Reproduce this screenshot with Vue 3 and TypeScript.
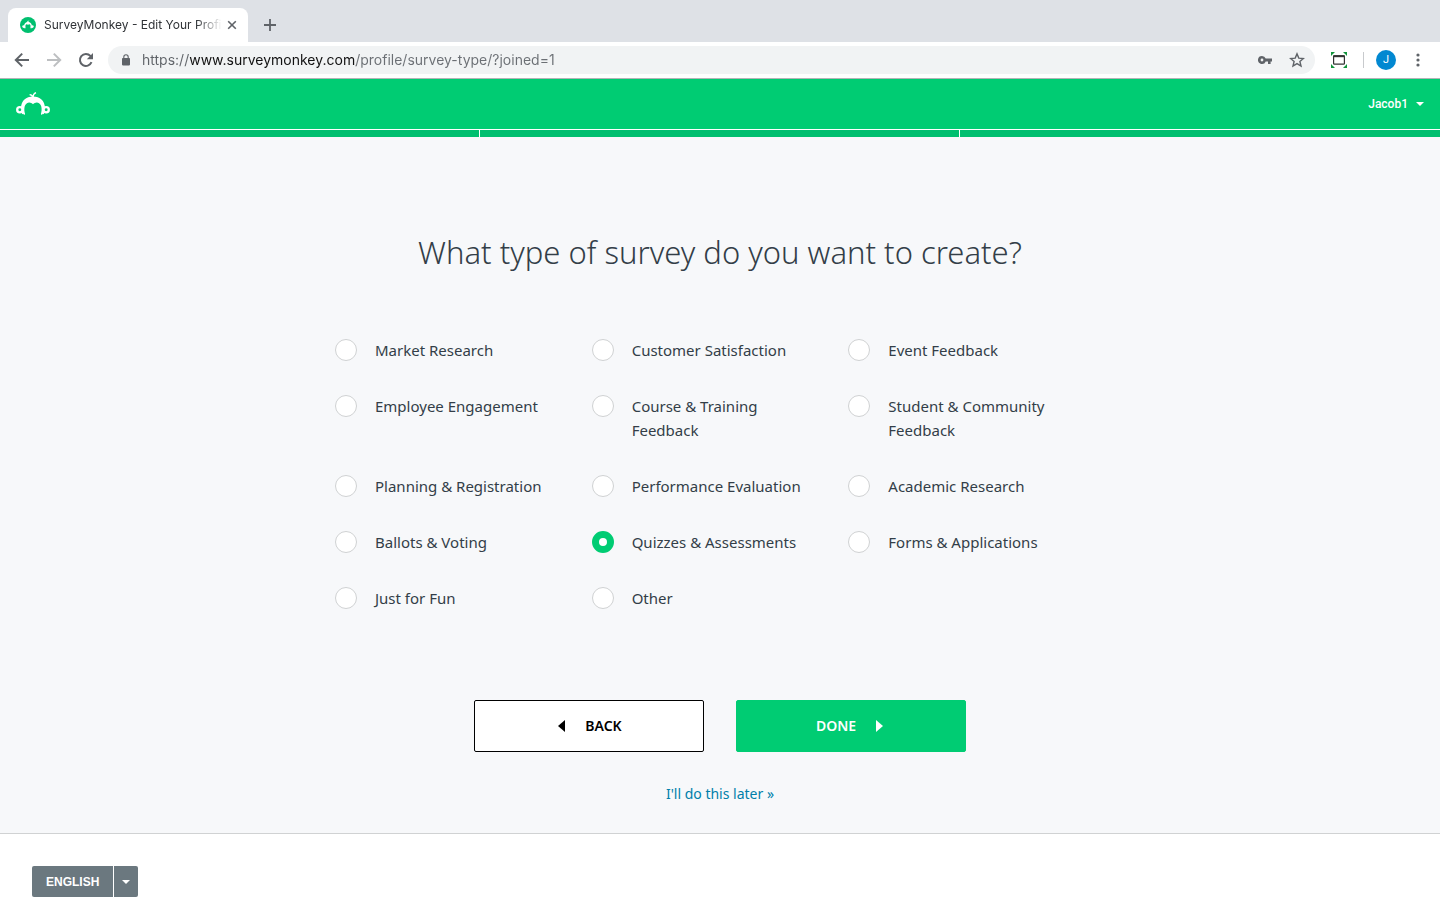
<script setup lang="ts">
import { ref } from 'vue'

interface SurveyType {
  id: string
  label: string
}

const surveyTypes: SurveyType[] = [
  { id: 'market', label: 'Market Research' },
  { id: 'customer', label: 'Customer Satisfaction' },
  { id: 'event', label: 'Event Feedback' },
  { id: 'employee', label: 'Employee Engagement' },
  { id: 'course', label: 'Course & Training Feedback' },
  { id: 'student', label: 'Student & Community Feedback' },
  { id: 'planning', label: 'Planning & Registration' },
  { id: 'performance', label: 'Performance Evaluation' },
  { id: 'academic', label: 'Academic Research' },
  { id: 'ballots', label: 'Ballots & Voting' },
  { id: 'quizzes', label: 'Quizzes & Assessments' },
  { id: 'forms', label: 'Forms & Applications' },
  { id: 'fun', label: 'Just for Fun' },
  { id: 'other', label: 'Other' },
]

const selected = ref<string>('quizzes')
const address = ref<string>('https://www.surveymonkey.com/profile/survey-type/?joined=1')
</script>

<template>
  <div class="window">
    <div class="tabstrip">
      <div class="tab">
        <svg class="favicon" viewBox="0 0 16 16" aria-hidden="true">
          <circle cx="8" cy="8" r="8" fill="#00bf6f" />
          <path d="M4.2 11.2C3.6 7.4 5 5 8 5s4.4 2.4 3.8 6.2h-1.4c.5-2.4 0-3.9-1.1-3.9L8 7.8l-1.3-.5c-1.1 0-1.6 1.5-1.1 3.9z" fill="#fff" />
          <circle cx="3.7" cy="9.6" r="1.4" fill="#fff" />
          <circle cx="12.3" cy="9.6" r="1.4" fill="#fff" />
          <path d="M7.9 5 7.4 3.9M8 5l.7-1.4" stroke="#fff" stroke-width=".7" />
        </svg>
        <span class="tab-title">SurveyMonkey - Edit Your Profi</span>
        <button class="icon-button tab-close" type="button" aria-label="Close tab">
          <svg width="10" height="10" viewBox="0 0 10 10"><path d="M1.2 1.2l7.6 7.6M8.8 1.2L1.2 8.8" stroke="#5f6368" stroke-width="1.6" /></svg>
        </button>
      </div>
      <button class="icon-button new-tab" type="button" aria-label="New tab">
        <svg width="12" height="12" viewBox="0 0 12 12"><path d="M6 0v12M0 6h12" stroke="#5f6368" stroke-width="1.8" /></svg>
      </button>
    </div>

    <div class="toolbar">
      <div class="nav">
        <button class="icon-button" type="button" aria-label="Back">
          <svg width="16" height="16" viewBox="0 0 16 16" fill="none" stroke="#5f6368" stroke-width="2"><path d="M15 8H2.4M8.2 1.6 1.8 8l6.4 6.4" /></svg>
        </button>
        <button class="icon-button" type="button" aria-label="Forward">
          <svg width="16" height="16" viewBox="0 0 16 16" fill="none" stroke="#bdbfc1" stroke-width="2"><path d="M1 8h12.6M7.8 1.6 14.2 8l-6.4 6.4" /></svg>
        </button>
        <button class="icon-button" type="button" aria-label="Reload">
          <svg width="16" height="16" viewBox="0 0 16 16"><path d="M13.5 10.2A6 6 0 1 1 12.4 3.9L14 5.5" fill="none" stroke="#5f6368" stroke-width="2" /><path d="M15 1v6.2H8.8z" fill="#5f6368" /></svg>
        </button>
      </div>
      <div class="omnibox">
        <svg width="8" height="12" viewBox="0 0 8 12" aria-hidden="true"><rect y="4" width="8" height="7.4" rx=".8" fill="#5f6368" /><path d="M1.8 4.4V3a2.2 2.2 0 0 1 4.4 0v1.4" fill="none" stroke="#5f6368" stroke-width="1.1" /></svg>
        <input v-model="address" class="address" type="text" aria-label="Address" spellcheck="false" />
        <button class="icon-button key" type="button" aria-label="Saved passwords">
          <svg width="14" height="10" viewBox="0 0 14 10"><path fill-rule="evenodd" d="M4 1a4 4 0 1 0 3.7 5.4H10V9h2.6V6.4H14V3.6H7.7A4 4 0 0 0 4 1zm0 2.6a1.4 1.4 0 1 1 0 2.8 1.4 1.4 0 0 1 0-2.8z" fill="#5f6368" /></svg>
        </button>
        <button class="icon-button" type="button" aria-label="Bookmark this page">
          <svg width="16" height="16" viewBox="0 0 16 16"><path d="M8 1.9l1.8 4.2 4.6.4-3.5 3 1.1 4.5L8 11.6 4 14l1.1-4.5-3.5-3 4.6-.4z" fill="none" stroke="#5f6368" stroke-width="1.4" /></svg>
        </button>
      </div>
      <button class="icon-button capture" type="button" aria-label="Capture">
        <svg width="16" height="16" viewBox="0 0 16 16"><path d="M0 0h4L0 4zM12 0h4v4zM16 12v4h-4zM4 16H0v-4z" fill="#12953c" /><rect x="1.6" y="2.6" width="12.8" height="10.8" fill="#fff" /><rect x="2.6" y="3.8" width="10.8" height="8.4" rx=".8" fill="#fff" stroke="#333" stroke-width="1.2" /><path d="M2.4 4.2h11.2" stroke="#333" stroke-width="2" /></svg>
      </button>
      <span class="divider"></span>
      <button class="avatar" type="button" aria-label="Profile">J</button>
      <button class="icon-button menu" type="button" aria-label="Menu">
        <svg width="4" height="14" viewBox="0 0 4 14" fill="#5f6368"><circle cx="2" cy="2" r="1.6" /><circle cx="2" cy="7" r="1.6" /><circle cx="2" cy="12" r="1.6" /></svg>
      </button>
    </div>

    <header class="site-header">
      <a href="#" class="logo" aria-label="SurveyMonkey">
        <svg width="34" height="24" viewBox="0 0 34 24">
          <path d="M6.2 22.2C5.6 20.6 4.900 18.400 5 15.600 5.300 9 10 4.600 17 4.600s11.700 4.400 12 11c.1 2.800-.6 5-1.200 6.600l-.9-.5-1.200 1.200-.8-1c1.500-4.300 1.100-10.900-3.900-11.500-1.500-.1-2.800.6-4 1.800-1.200-1.200-2.500-1.900-4-1.800-5 .6-5.400 7.200-3.900 11.500l-.8 1-1.200-1.200z" fill="#fff" />
          <path d="M16.600 5.400c0-1.500-1.200-2.600-3-2.800M17 5.400c0-2.400 1-4 3-4.800" fill="none" stroke="#fff" stroke-width="1.300" />
          <g fill="#00cc73" stroke="#fff" stroke-width="2.300"><circle cx="3.800" cy="17.800" r="2.600" /><circle cx="30.200" cy="17.800" r="2.600" /></g>
        </svg>
      </a>
      <button class="account" type="button">
        Jacob1
        <svg width="8" height="4" viewBox="0 0 8 4" aria-hidden="true"><path d="M0 0h8L4 4z" fill="#fff" /></svg>
      </button>
    </header>
    <div class="progress" role="progressbar" aria-label="Profile setup" aria-valuemin="0" aria-valuemax="3" aria-valuenow="3">
      <span v-for="step in 3" :key="step" class="step"></span>
    </div>

    <main class="content">
      <h1 id="question" class="question">What type of survey do you want to create?</h1>
      <form @submit.prevent>
        <div class="options" role="radiogroup" aria-labelledby="question">
          <label v-for="type in surveyTypes" :key="type.id" class="option" :for="type.id">
            <input :id="type.id" v-model="selected" class="radio" type="radio" name="survey-type" :value="type.id" />
            <span class="option-label">{{ type.label }}</span>
          </label>
        </div>
        <div class="actions">
          <button class="action back" type="button">
            <svg width="7" height="12" viewBox="0 0 7 12" aria-hidden="true"><path d="M7 0v12L0 6z" fill="currentColor" /></svg>
            BACK
          </button>
          <button class="action done" type="submit">
            DONE
            <svg width="7" height="12" viewBox="0 0 7 12" aria-hidden="true"><path d="M0 0v12l7-6z" fill="currentColor" /></svg>
          </button>
        </div>
      </form>
      <a class="later" href="#">I'll do this later »</a>
    </main>

    <footer class="footer">
      <div class="language">
        <button class="language-name" type="button">ENGLISH</button>
        <button class="language-toggle" type="button" aria-label="Choose language">
          <svg width="8" height="4" viewBox="0 0 8 4"><path d="M0 0h8L4 4z" fill="#fff" /></svg>
        </button>
      </div>
    </footer>
  </div>
</template>

<style>
body {
  margin: 0;
  background: #fff;
}
</style>

<style scoped>
.window {
  box-sizing: border-box;
  min-height: 100vh;
  font-family: "Noto Sans", Roboto, sans-serif;
  color: #333e48;
}
button {
  margin: 0;
  padding: 0;
  border: 0;
  background: none;
  font-family: inherit;
  color: inherit;
  cursor: pointer;
}
svg {
  display: block;
  flex: none;
}
.icon-button {
  display: flex;
  flex: none;
}
.tabstrip {
  display: flex;
  align-items: flex-end;
  height: 42px;
  padding-left: 8px;
  background: #dee1e6;
}
.tab {
  display: flex;
  align-items: center;
  box-sizing: border-box;
  width: 240px;
  height: 34px;
  padding: 0 11px 0 12px;
  border-radius: 8px 8px 0 0;
  background: #fff;
}
.favicon {
  width: 16px;
  height: 16px;
  margin-right: 8px;
}
.tab-title {
  flex: 1;
  white-space: nowrap;
  font: 12px/16px Inter, Roboto, sans-serif;
  color: #2f3236;
  mask-image: linear-gradient(to right, #000 152px, transparent 178px);
}
.tab-close {
  margin-left: 5px;
}
.new-tab {
  margin: 0 0 11px 16px;
}
.toolbar {
  display: flex;
  align-items: center;
  box-sizing: border-box;
  height: 37px;
  padding: 0 20px 0 14px;
  border-bottom: 1px solid #b2b4b6;
  background: #fff;
}
.nav {
  display: flex;
  gap: 16px;
  margin-right: 14px;
}
.omnibox {
  display: flex;
  flex: 1;
  align-items: center;
  gap: 12px;
  height: 28px;
  padding: 0 10px 0 14px;
  border-radius: 14px;
  background: #f1f3f4;
}
/* Host name is emphasised; scheme and path are muted. */
.address {
  flex: 1;
  min-width: 0;
  padding: 0;
  border: 0;
  outline: 0;
  font: 14px/20px Inter, Roboto, sans-serif;
  color: transparent;
  background: linear-gradient(to right, #5f6368 48px, #111 48px, #111 214px, #6b6f74 214px);
  background-clip: text;
}
.key {
  margin-right: 5px;
}
.capture {
  margin-left: 16px;
}
.divider {
  width: 1px;
  height: 16px;
  margin: 0 12px 0 16px;
  background: #c8cacd;
}
.avatar {
  width: 20px;
  height: 20px;
  border-radius: 50%;
  background: #0288d1;
  color: #fff;
  font: 11px/20px Roboto, sans-serif;
}
.menu {
  margin-left: 20px;
}
.site-header {
  display: flex;
  align-items: center;
  justify-content: space-between;
  height: 50px;
  padding: 0 16px;
  background: #00cc73;
}
.account {
  display: flex;
  align-items: center;
  gap: 8px;
  font: 500 12px/20px Roboto, sans-serif;
  color: #fff;
}
.progress {
  display: grid;
  grid-template-columns: repeat(3, 1fr);
  height: 7px;
  border-top: 1px solid #fff;
}
.step {
  background: #00bf6f;
}
.step:not(:last-child) {
  border-right: 1px solid #fff;
}
.content {
  display: flex;
  flex-direction: column;
  align-items: center;
  padding: 95px 24px 28px;
  border-bottom: 1px solid #d0d2d3;
  background: #f7f8fa;
}
.question {
  margin: 0 0 66px;
  font-size: 31px;
  font-weight: 300;
  line-height: 40px;
  text-align: center;
}
.options {
  display: grid;
  grid-template-columns: repeat(3, 1fr);
  row-gap: 32px;
  width: 770px;
  max-width: 100%;
}
.option {
  display: flex;
  align-items: flex-start;
  gap: 18px;
  padding-right: 32px;
  font-size: 15px;
  line-height: 24px;
  cursor: pointer;
}
.radio {
  flex: none;
  box-sizing: border-box;
  width: 22px;
  height: 22px;
  margin: 1px 0 0;
  appearance: none;
  border: 1px solid #d0d2d3;
  border-radius: 50%;
  background: #fff;
}
.radio:checked {
  border: 7px solid #00cc73;
}
.actions {
  display: flex;
  justify-content: center;
  gap: 32px;
  margin: 90px 0 31px;
}
.action {
  display: flex;
  align-items: center;
  justify-content: center;
  gap: 20px;
  box-sizing: border-box;
  width: 230px;
  height: 52px;
  padding-bottom: 1px;
  border: 1px solid #000;
  border-radius: 2px;
  background: #fff;
  color: #000;
  font-size: 14px;
  font-weight: 600;
}
.back {
  padding-left: 2px;
}
.done {
  padding-right: 3px;
  border-color: #00cc73;
  background: #00cc73;
  color: #fff;
}
.later {
  font-size: 14px;
  line-height: 22px;
  color: #007faa;
  text-decoration: none;
}
.footer {
  padding: 32px 32px 0;
  background: #fff;
}
.language {
  display: flex;
  gap: 1px;
}
.language-name,
.language-toggle {
  display: flex;
  align-items: center;
  justify-content: center;
  height: 31px;
  background: #6b787f;
  color: #fff;
}
.language-name {
  padding: 0 14px;
  border-radius: 2px 0 0 2px;
  font: 700 12px/16px "Liberation Sans", sans-serif;
}
.language-toggle {
  width: 24px;
  border-radius: 0 2px 2px 0;
}
</style>
